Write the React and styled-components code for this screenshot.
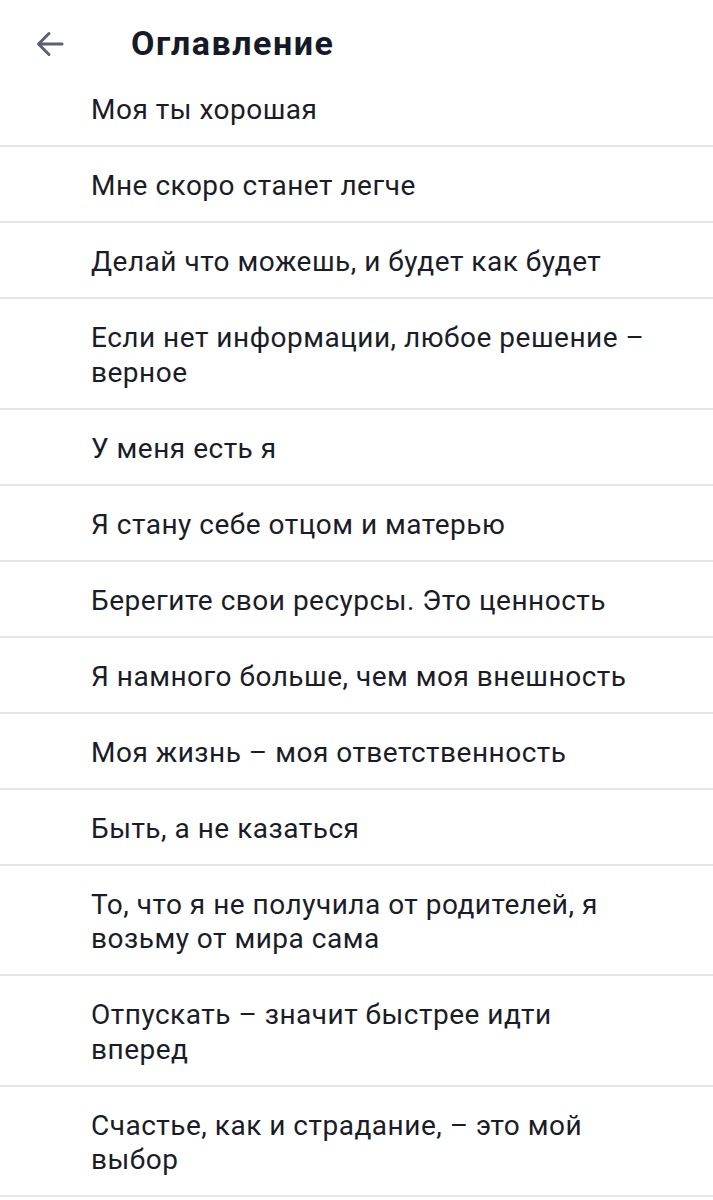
import styled, { createGlobalStyle } from "styled-components";

const GlobalStyle = createGlobalStyle`
  body {
    margin: 0;
    background: #ffffff;
    font-family: Roboto, "Noto Sans", sans-serif;
  }
`;

const chapters = [
  "Моя ты хорошая",
  "Мне скоро станет легче",
  "Делай что можешь, и будет как будет",
  "Если нет информации, любое решение – верное",
  "У меня есть я",
  "Я стану себе отцом и матерью",
  "Берегите свои ресурсы. Это ценность",
  "Я намного больше, чем моя внешность",
  "Моя жизнь – моя ответственность",
  "Быть, а не казаться",
  "То, что я не получила от родителей, я возьму от мира сама",
  "Отпускать – значит быстрее идти вперед",
  "Счастье, как и страдание, – это мой выбор",
];

export default function App() {
  return (
    <>
      <GlobalStyle />
      <Page>
        <Header>
          <BackButton aria-label="Назад">
            <svg width="32" height="32" viewBox="0 0 32 32" fill="none">
              <path
                d="M28 16H5M15 5.5L4.5 16L15 26.5"
                stroke="#5b6176"
                strokeWidth="3"
                strokeLinecap="round"
                strokeLinejoin="round"
              />
            </svg>
          </BackButton>
          <Title>Оглавление</Title>
        </Header>
        <List>
          {chapters.map((c) => (
            <Item key={c}>{c}</Item>
          ))}
        </List>
      </Page>
    </>
  );
}

const Page = styled.div`
  width: 713px;
  min-height: 1200px;
  background: #fff;
`;

const Header = styled.header`
  display: flex;
  align-items: center;
  height: 71px;
  padding-left: 34px;
  box-sizing: border-box;
`;

const BackButton = styled.button`
  display: flex;
  align-items: center;
  justify-content: center;
  width: 32px;
  height: 32px;
  padding: 0;
  border: none;
  background: none;
  margin-top: 16px;
`;

const Title = styled.h1`
  margin: 14px 0 0 65px;
  font-size: 34px;
  font-weight: 700;
  color: #161927;
  letter-spacing: 1.5px;
`;

const List = styled.ul`
  list-style: none;
  margin: 0;
  padding: 0;
`;

const Item = styled.li`
  padding: 22px 63px 17.5px 91px;
  font-size: 28px;
  line-height: 34.5px;
  color: #1a1c28;
  border-bottom: 2px solid #e6e6e6;
  letter-spacing: 0.5px;
`;
